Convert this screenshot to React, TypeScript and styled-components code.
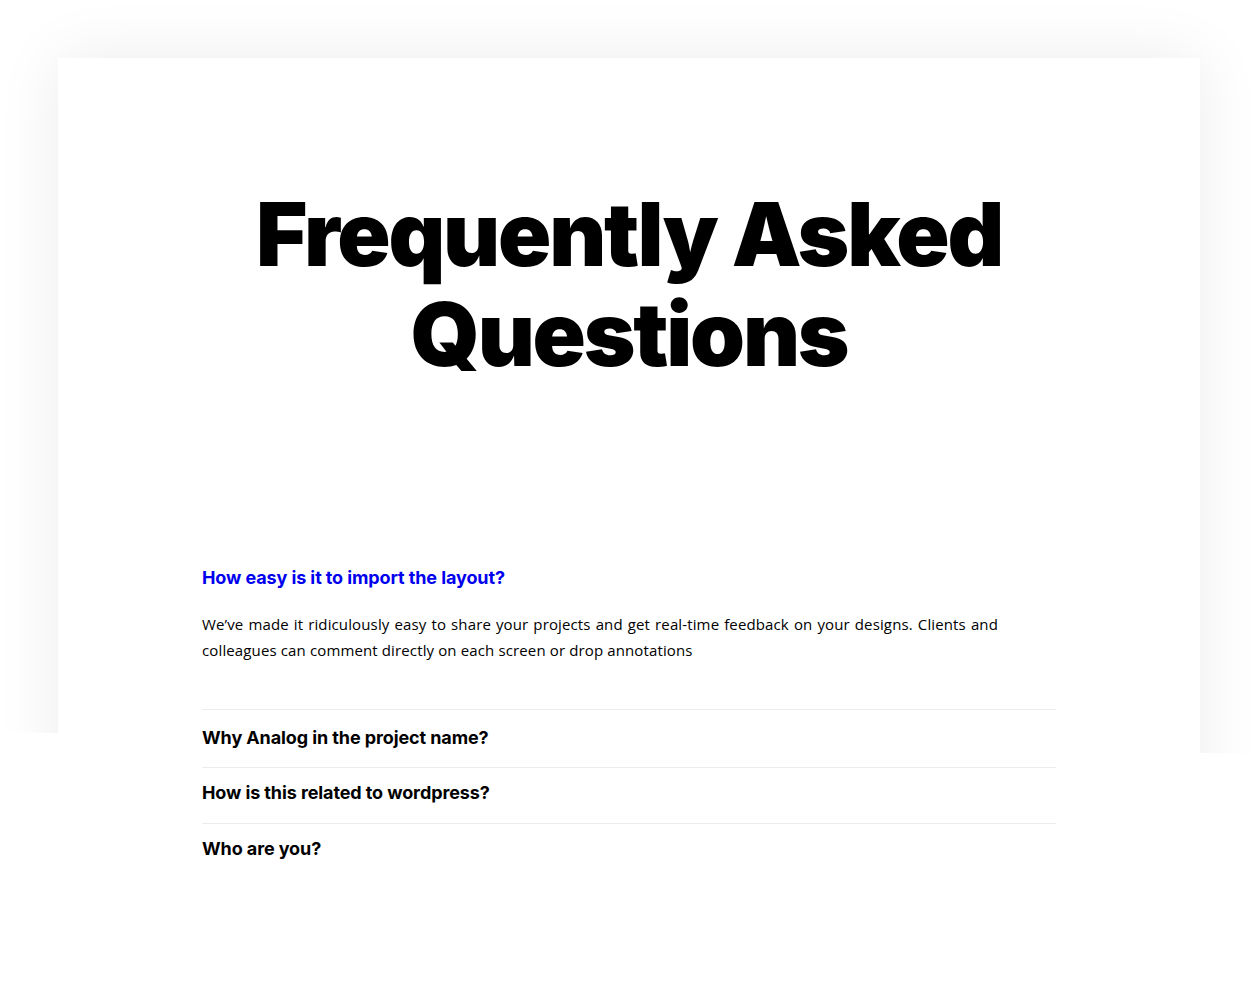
import React from "react";
import styled, { createGlobalStyle } from "styled-components";

const Global = createGlobalStyle`
  html, body { margin: 0; padding: 0; background: #fff; }
  body { font-family: "Inter", "Liberation Sans", sans-serif; color: #000; }
  * { box-sizing: border-box; }
`;

const Page = styled.div`
  width: 1258px;
  padding-top: 58px;
  overflow: hidden;
  min-height: 988px;
`;

const Card = styled.section`
  width: 1142px;
  margin: 0 auto;
  background: #fff;
  box-shadow: 0 0 60px rgba(0, 0, 0, 0.08);
  padding: 126px 144px 140px;
`;

const Title = styled.h1`
  margin: 0;
  font-family: "Inter", sans-serif;
  font-weight: 900;
  font-size: 88px;
  line-height: 100px;
  letter-spacing: -2.2px;
  text-align: center;
`;

const Faq = styled.div`
  margin-top: 182px;
`;

const OpenQuestion = styled.h3`
  margin: 0;
  font-family: "Inter", sans-serif;
  font-weight: 700;
  font-size: 18px;
  line-height: 24px;
  letter-spacing: -0.1px;
  color: #0000ee;
`;

const Answer = styled.p`
  margin: 21px 0 0;
  max-width: 796px;
  font-family: "Open Sans", sans-serif;
  font-size: 15px;
  line-height: 26px;
  letter-spacing: 0.13px;
  text-align: justify;
  color: #000;
`;

const Lower = styled.section`
  position: relative;
  z-index: 1;
  width: 1142px;
  margin: -94px auto 0;
  padding: 0 144px 120px;
  &::before {
    content: "";
    position: absolute;
    z-index: -1;
    left: -200px;
    right: -200px;
    top: 24px;
    bottom: -100px;
    background: #fff;
    transform: rotate(1deg);
    transform-origin: 200px 0;
  }
`;

const Row = styled.div`
  padding: 14px 0 19px;
  border-top: 1px solid #ececec;
  &:first-child {
    padding: 17px 0 18px;
  }
`;

const Question = styled.h3`
  margin: 0;
  font-family: "Inter", sans-serif;
  font-weight: 700;
  font-size: 18px;
  line-height: 22px;
  letter-spacing: -0.1px;
  color: #000;
`;

const questions = [
  "Why Analog in the project name?",
  "How is this related to wordpress?",
  "Who are you?",
];

export default function App() {
  return (
    <Page>
      <Global />
      <Card>
        <Title>
          Frequently Asked
          <br />
          Questions
        </Title>
        <Faq>
          <OpenQuestion>How easy is it to import the layout?</OpenQuestion>
          <Answer>
            We’ve made it ridiculously easy to share your projects and get real-time feedback on your
            designs. Clients and colleagues can comment directly on each screen or drop annotations
          </Answer>
        </Faq>
      </Card>
      <Lower>
        {questions.map((q) => (
          <Row key={q}>
            <Question>{q}</Question>
          </Row>
        ))}
      </Lower>
    </Page>
  );
}
